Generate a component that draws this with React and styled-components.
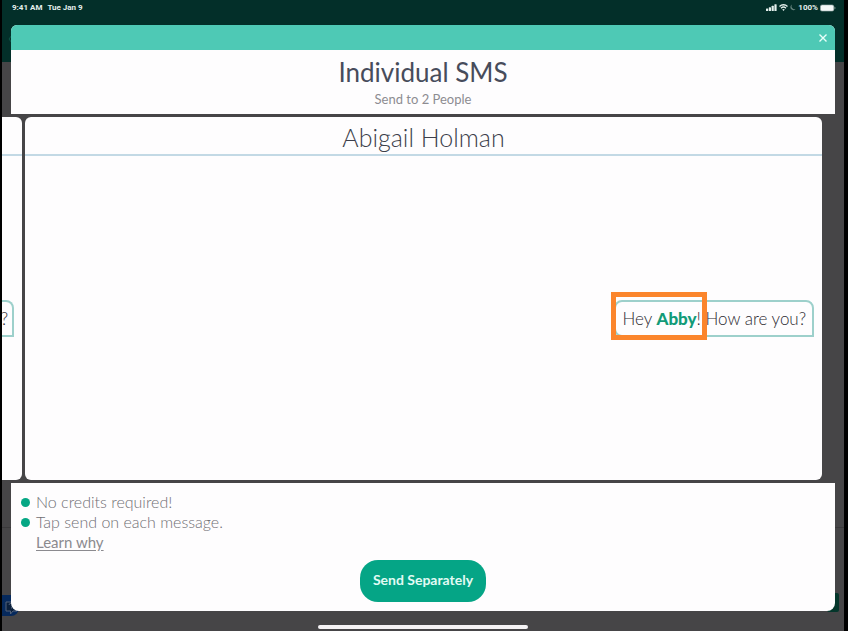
import React from "react";
import styled, { createGlobalStyle } from "styled-components";

const GlobalStyle = createGlobalStyle`
  * {
    box-sizing: border-box;
  }
  body {
    margin: 0;
    background-color: #000000;
    font-family: Lato, "Open Sans", sans-serif;
  }
  h1, h2, p, ul {
    margin: 0;
    padding: 0;
    font-weight: 400;
  }
`;

const Screen = styled.div`
  position: relative;
  display: flex;
  flex-direction: column;
  min-height: 100vh;
  margin: 0 4px 0 2px;
  background: linear-gradient(#032f29 62px, #464547 62px);
  overflow: hidden;
`;

const StatusBar = styled.div`
  display: flex;
  justify-content: space-between;
  height: 25px;
  padding: 0 8px 0 10px;
  color: #e4efec;
  font-family: Roboto, sans-serif;
  font-size: 8px;
  font-weight: 700;
  line-height: 15px;
`;

const StatusGroup = styled.div`
  display: flex;
  align-items: center;
  height: 15px;
  gap: ${(props) => props.$gap}px;
`;

// What still shows of the page under the dialog
const BackDivider = styled.div`
  position: absolute;
  left: 0;
  right: 0;
  bottom: 103px;
  height: 1px;
  background-color: #3a393b;
`;

const BackChevron = styled.svg`
  position: absolute;
  left: 6px;
  top: 34px;
`;

const ChatBadge = styled.div`
  position: absolute;
  left: 0;
  bottom: 15px;
  width: 17px;
  height: 21px;
  padding: 4px 0 0 3px;
  border-radius: 0 0 8px 0;
  background-color: #06295c;
`;

const GreenBadge = styled.div`
  position: absolute;
  right: 5px;
  bottom: 19px;
  width: 12px;
  height: 19px;
  border-radius: 2px;
  background-color: #04362b;
`;

const Dialog = styled.main`
  position: relative;
  display: flex;
  flex: 1;
  flex-direction: column;
  gap: 3px;
`;

const Top = styled.header`
  margin: 0 9px;
  border-radius: 6px 6px 0 0;
  background-color: #fefdfe;
  overflow: hidden;
`;

const TitleBar = styled.div`
  display: flex;
  align-items: center;
  justify-content: flex-end;
  height: 25px;
  padding-right: 5px;
  background-color: #4ec9b5;
`;

const CloseButton = styled.button`
  display: flex;
  align-items: center;
  justify-content: center;
  width: 14px;
  height: 14px;
  padding: 0;
  border: none;
  background: none;
  cursor: pointer;
`;

const Heading = styled.div`
  height: 64px;
  padding-top: 6px;
  text-align: center;
`;

const Title = styled.h1`
  color: #474c5b;
  font-size: 26px;
  line-height: 32px;
`;

const Subtitle = styled.p`
  color: #8d8c91;
  font-size: 13px;
  line-height: 22px;
`;

const Carousel = styled.div`
  display: flex;
  flex: 1;
  gap: 3px;
  padding-right: 22px;
`;

const Card = styled.section`
  display: flex;
  flex: ${(props) => (props.$peek ? "0 0 20px" : "1")};
  flex-direction: column;
  min-width: 0;
  border-radius: ${(props) => (props.$peek ? "0 6px 6px 0" : "6px")};
  background-color: #fefdfe;
  overflow: hidden;
`;

const CardName = styled.h2`
  height: 39px;
  border-bottom: 2px solid #c3d9e5;
  color: #3c3f4b;
  font-size: 25px;
  font-weight: 300;
  line-height: 40px;
  text-align: center;
`;

const Messages = styled.div`
  display: flex;
  flex: 1;
  align-items: center;
  justify-content: flex-end;
  padding-right: 8px;
`;

const Bubble = styled.p`
  position: relative;
  padding: 0 6px;
  border: 2px solid #9dd0cb;
  border-radius: 8px 8px 0 8px;
  color: #2d2b31;
  font-size: 17px;
  font-weight: 300;
  line-height: 33px;
  white-space: nowrap;

  strong {
    color: #129b78;
    font-weight: 900;
  }
`;

const PeekBubble = styled(Bubble)`
  padding: 0 4px 0 0;
  border-left: none;
  border-radius: 0 8px 0 0;
`;

const Highlight = styled.span`
  position: absolute;
  left: -5px;
  top: -10px;
  width: 96px;
  height: 48px;
  border: 5px solid #fb852c;
`;

const Footer = styled.footer`
  display: flex;
  flex-direction: column;
  align-items: flex-start;
  height: 128px;
  margin: 0 9px;
  padding: 9px 10px;
  border-radius: 0 0 8px 8px;
  background-color: #fefdfe;
`;

const Notes = styled.ul`
  list-style: none;
`;

const Note = styled.li`
  display: flex;
  align-items: center;
  gap: 6px;
  color: #706f74;
  font-size: 16px;
  font-weight: 300;
  line-height: 20px;

  &::before {
    content: "";
    width: 9px;
    height: 9px;
    border-radius: 50%;
    background-color: ${(props) => (props.$plain ? "transparent" : "#06a785")};
  }
`;

const LearnLink = styled.a`
  color: #8b8a8f;
  font-size: 15px;
  font-weight: 400;
  text-underline-offset: 2px;
`;

const SendButton = styled.button`
  align-self: center;
  height: 42px;
  margin-top: auto;
  padding: 0 13px 3px;
  border: none;
  border-radius: 18px;
  background-color: #05a586;
  color: #e2fbf4;
  font-family: inherit;
  font-size: 14px;
  font-weight: 700;
  cursor: pointer;
`;

const HomeArea = styled.div`
  display: flex;
  justify-content: center;
  height: 20px;
  padding-top: 14px;
`;

const HomeBar = styled.div`
  width: 25%;
  height: 4px;
  border-radius: 2px;
  background-color: #f5f3f5;
`;

const StatusIcons = () => (
  <>
    <svg width="11" height="7" viewBox="0 0 11 7" fill="currentColor">
      <rect x="0" y="4.5" width="2.2" height="2.5" rx="0.5" />
      <rect x="2.8" y="3.2" width="2.2" height="3.8" rx="0.5" />
      <rect x="5.6" y="1.8" width="2.2" height="5.2" rx="0.5" />
      <rect x="8.4" y="0.2" width="2.2" height="6.8" rx="0.5" />
    </svg>
    <svg width="9" height="7" viewBox="0 0 9 7" fill="none" stroke="currentColor">
      <path d="M0.5 2.4a5.8 5.8 0 0 1 8 0" strokeWidth="1.4" />
      <path d="M2 4.2a3.6 3.6 0 0 1 5 0" strokeWidth="1.3" />
      <path d="M3.2 5.5a2 2 0 0 1 2.6 0L4.5 7z" fill="currentColor" stroke="none" />
    </svg>
    <svg width="6" height="7" viewBox="0 0 6 7" fill="#66847e">
      <path d="M2 0.5A3 3 0 1 0 5.6 5.2 3.2 3.2 0 0 1 2 0.5z" />
    </svg>
  </>
);

const Battery = () => (
  <svg width="16" height="8" viewBox="0 0 16 8">
    <rect x="0.4" y="0.9" width="13.4" height="6.2" rx="1.6" fill="#f3f8f7" stroke="#8fa5a1" strokeWidth="0.6" />
    <path d="M14.5 2.8q1 0.3 1 1.2t-1 1.2z" fill="#8fa5a1" />
  </svg>
);

const App = () => {
  return (
    <>
      <GlobalStyle />
      <Screen>
        <BackDivider />
        <BackChevron width="5" height="10" viewBox="0 0 5 10" fill="none" stroke="#0d5547">
          <path d="M4 1L1 5l3 4" />
        </BackChevron>
        <ChatBadge>
          <svg width="13" height="14" viewBox="0 0 13 14" fill="#0a1f3c" stroke="#53627a">
            <path d="M1 1h11v9H8l-2.5 3V10H1z" />
            <path d="M4 4a2 2 0 1 1 2.5 2.2v1.3" fill="none" />
          </svg>
        </ChatBadge>
        <GreenBadge />
        <StatusBar>
          <StatusGroup $gap={5}>
            <span>9:41 AM</span>
            <span>Tue Jan 9</span>
          </StatusGroup>
          <StatusGroup $gap={2}>
            <StatusIcons />
            <span>100%</span>
            <Battery />
          </StatusGroup>
        </StatusBar>
        <Dialog>
          <Top>
            <TitleBar>
              <CloseButton type="button" aria-label="Close">
                <svg width="8" height="8" viewBox="0 0 8 8" stroke="#e9fffa" strokeWidth="1.4">
                  <path d="M0.5 0.5l7 7M7.5 0.5l-7 7" />
                </svg>
              </CloseButton>
            </TitleBar>
            <Heading>
              <Title>Individual SMS</Title>
              <Subtitle>Send to 2 People</Subtitle>
            </Heading>
          </Top>
          <Carousel>
            <Card $peek>
              <CardName as="div" />
              <Messages>
                <PeekBubble>?</PeekBubble>
              </Messages>
            </Card>
            <Card>
              <CardName>Abigail Holman</CardName>
              <Messages>
                <Bubble>
                  Hey <strong>Abby</strong>! How are you?
                  <Highlight />
                </Bubble>
              </Messages>
            </Card>
          </Carousel>
          <Footer>
            <Notes>
              <Note>No credits required!</Note>
              <Note>Tap send on each message.</Note>
              <Note $plain>
                <LearnLink href="#learn-why">Learn why</LearnLink>
              </Note>
            </Notes>
            <SendButton type="button">Send Separately</SendButton>
          </Footer>
        </Dialog>
        <HomeArea>
          <HomeBar />
        </HomeArea>
      </Screen>
    </>
  );
};

export default App;
